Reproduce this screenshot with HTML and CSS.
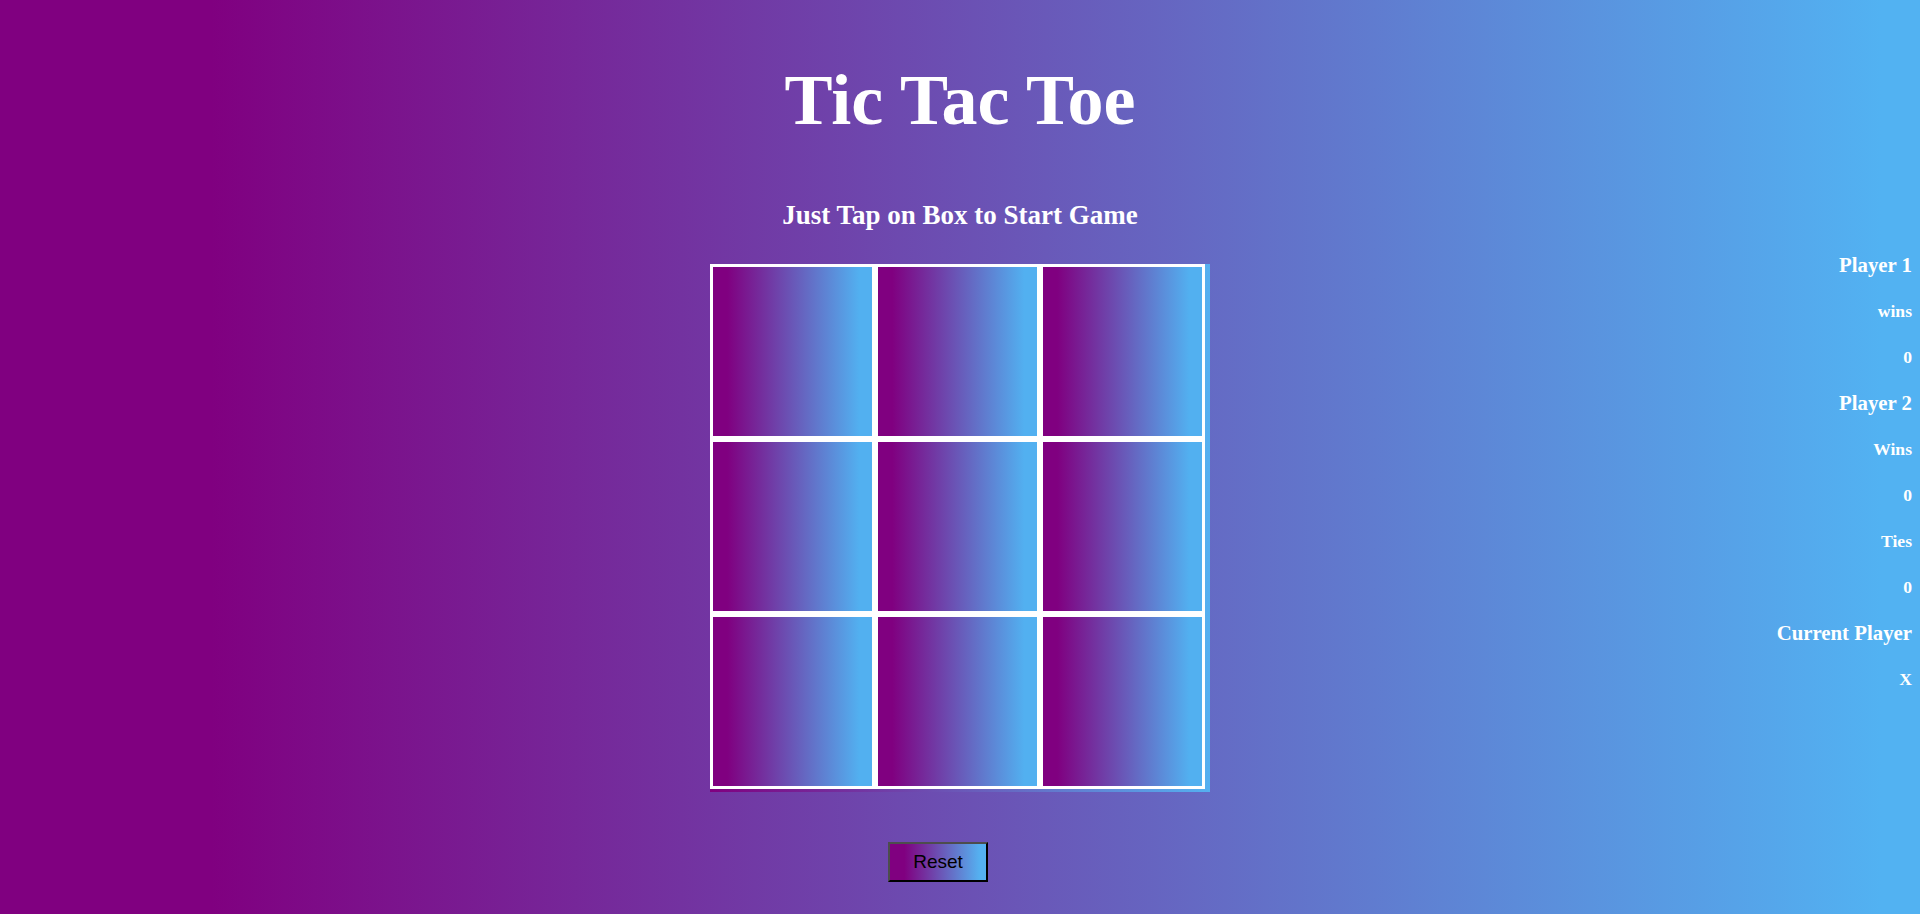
FILE: index.html
```html
<!DOCTYPE html>
<html lang="en">
<head>
<meta charset="utf-8">
<title>Tic Tac Toe</title>
<link rel="stylesheet" href="styles.css">
</head>
<body>
  <header class="header">
    <h1 class="title">Tic Tac Toe</h1>
    <h2 class="subtitle">Just Tap on Box to Start Game</h2>
  </header>
  <main class="game">
    <div class="spacer"></div>
    <div class="board">
      <div class="cell"></div>
      <div class="cell"></div>
      <div class="cell"></div>
      <div class="cell"></div>
      <div class="cell"></div>
      <div class="cell"></div>
      <div class="cell"></div>
      <div class="cell"></div>
      <div class="cell"></div>
    </div>
    <aside class="scores">
      <div class="score-head">Player 1</div>
      <div class="score-item">wins</div>
      <div class="score-item">0</div>
      <div class="score-head">Player 2</div>
      <div class="score-item">Wins</div>
      <div class="score-item">0</div>
      <div class="score-item">Ties</div>
      <div class="score-item">0</div>
      <div class="score-head">Current Player</div>
      <div class="score-item">X</div>
    </aside>
  </main>
  <div class="controls">
    <button class="reset" type="button">Reset</button>
  </div>
</body>
</html>
```
FILE: styles.css
```css
html, body {
  margin: 0;
  padding: 0;
}

body {
  min-height: 100vh;
  background: linear-gradient(to right, #800080 11%, #52b2f2 98%);
  color: #fff;
  font-family: "Liberation Serif", "Times New Roman", serif;
}

.header {
  padding-top: 59px;
  text-align: center;
}

.title {
  margin: 0;
  font-size: 72px;
  font-weight: bold;
  line-height: normal;
}

.subtitle {
  margin: 58px 0 0;
  font-size: 27px;
  font-weight: bold;
  line-height: normal;
}

.game {
  display: grid;
  grid-template-columns: 1fr 500px 1fr;
  align-items: start;
  margin-top: 11px;
}

.board {
  margin-top: 22px;
  width: 500px;
  height: 528px;
  box-sizing: border-box;
  padding: 0 5px 3px 0;
  display: grid;
  grid-template-columns: repeat(3, 165px);
  grid-template-rows: repeat(3, 175px);
  background: linear-gradient(to right, #800080, #55b0f0);
}

.cell {
  border: 3px solid #fff;
  background: linear-gradient(to right, #800080 9%, #52b0f0 92%);
}

.scores {
  display: flex;
  flex-direction: column;
  align-items: flex-end;
  padding-right: 8px;
  font-weight: bold;
}

.score-head {
  font-size: 20.8px;
  line-height: 46px;
}

.score-item {
  font-size: 17.6px;
  line-height: 46px;
}

.controls {
  display: flex;
  justify-content: center;
  padding: 50px 44px 0 0;
}

.reset {
  width: 100px;
  height: 40px;
  box-sizing: border-box;
  border: 2px solid;
  border-color: #4d4d4d #000 #000 #4d4d4d;
  background: linear-gradient(to right, #800080 15%, #55b0f0 93%);
  color: #000;
  font-family: "Liberation Sans", Arial, sans-serif;
  font-size: 19px;
  padding: 0;
}
```
